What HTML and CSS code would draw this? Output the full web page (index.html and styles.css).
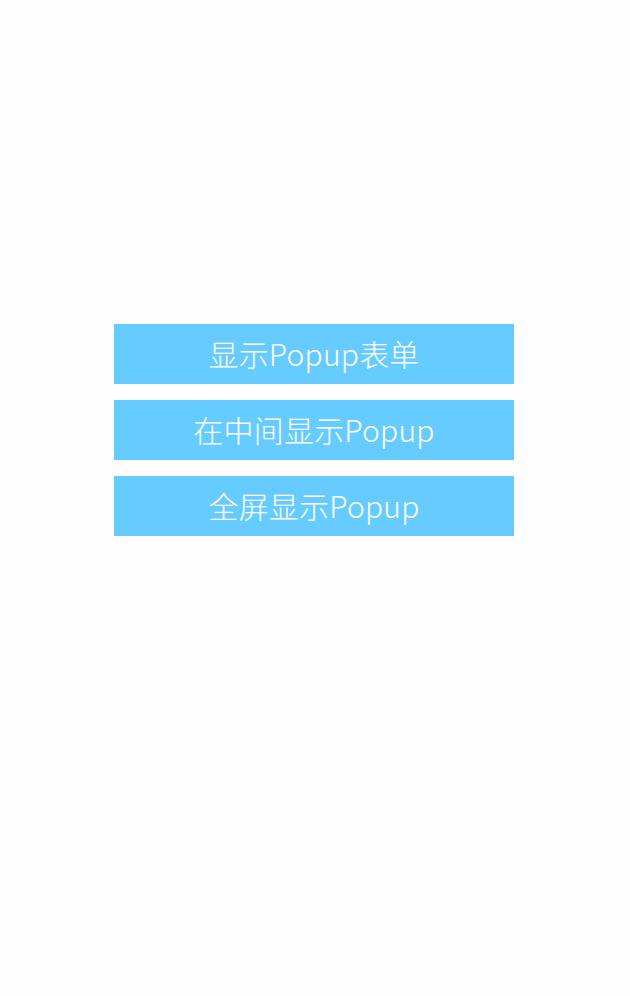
FILE: index.html
```html
<!DOCTYPE html>
<html lang="zh-CN">
<head>
<meta charset="utf-8">
<title>Popup</title>
<link rel="stylesheet" href="styles.css">
</head>
<body>
<main class="page">
  <div class="actions">
    <button class="btn">显示Popup表单</button>
    <button class="btn">在中间显示Popup</button>
    <button class="btn">全屏显示Popup</button>
  </div>
</main>
</body>
</html>
```
FILE: styles.css
```css
html, body {
  margin: 0;
  padding: 0;
  background: #fefefe;
}
.page {
  padding: 324px 2px 0 0;
  display: flex;
  justify-content: center;
}
.actions {
  display: flex;
  flex-direction: column;
  gap: 16px;
  width: 400px;
}
.btn {
  height: 60px;
  border: none;
  border-radius: 0;
  padding: 0 0 2px;
  background: #66ccff;
  color: #ffffff;
  font-family: "Noto Sans CJK SC", "Noto Sans", sans-serif;
  font-weight: 300;
  font-size: 30px;
  line-height: 58px;
  letter-spacing: 0.2px;
}
```
